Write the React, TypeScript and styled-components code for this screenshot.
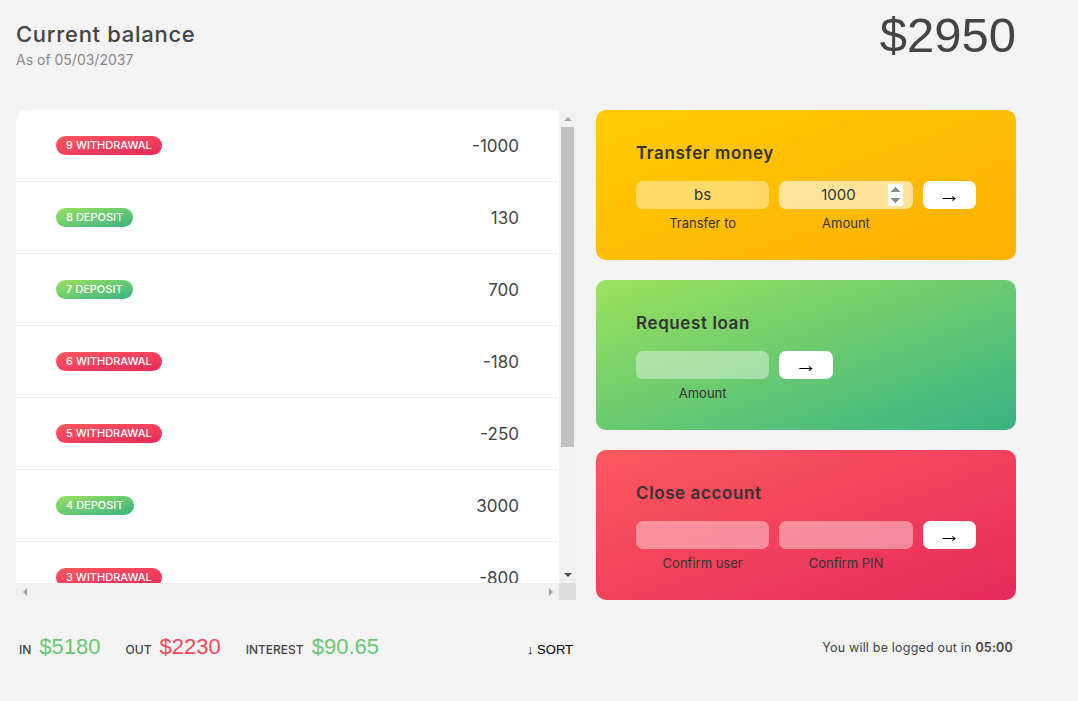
import React from 'react';
import styled, { createGlobalStyle, css } from 'styled-components';

const GlobalStyle = createGlobalStyle`
  * { margin: 0; padding: 0; box-sizing: border-box; }
  html, body { background: #f3f3f3; }
  body {
    font-family: Inter, "Open Sans", sans-serif;
    color: #444;
    line-height: 1.5;
  }
`;

const gradients = {
  withdrawal: 'linear-gradient(to top left, #e52a5a, #ff585f)',
  deposit: 'linear-gradient(to top left, #39b385, #9be15d)',
  transfer: 'linear-gradient(to top left, #ffb003, #ffcb03)',
  loan: 'linear-gradient(to top left, #39b385, #9be15d)',
  close: 'linear-gradient(to top left, #e52a5a, #ff585f)',
};

const AppGrid = styled.main`
  width: 1000px;
  margin: 0 0 0 16px;
  display: grid;
  grid-template-columns: 4fr 3fr;
  grid-template-rows: auto repeat(3, 150px) auto;
  gap: 20px;
`;

const Balance = styled.section`
  grid-column: 1 / span 2;
  display: flex;
  align-items: flex-end;
  justify-content: space-between;
  margin-bottom: 20px;
`;

const BalanceLabel = styled.p`
  font-size: 22px;
  font-weight: 500;
  line-height: 33px;
  letter-spacing: 0.7px;
  margin-bottom: -2px;
`;

const BalanceDate = styled.p`
  font-size: 14px;
  line-height: 21px;
  color: #888;
`;

const BalanceValue = styled.p`
  font-family: "Liberation Sans", Arial, sans-serif;
  font-size: 49px;
  line-height: 70px;
  font-weight: 400;
`;

/* Movements panel with its (drawn) classic scrollbars */
const MovementsPanel = styled.section`
  grid-row: 2 / span 3;
  background-color: #fff;
  border-radius: 10px;
  display: grid;
  grid-template-columns: 1fr 17px;
  grid-template-rows: 1fr 17px;
  min-height: 0;
`;

const MovementsList = styled.div`
  overflow: hidden;
  min-height: 0;
`;

const VScrollbar = styled.div`
  background: #f1f1f1;
  display: flex;
  flex-direction: column;
  min-height: 0;
`;

const HScrollbar = styled.div`
  background: #f1f1f1;
  display: flex;
  justify-content: space-between;
`;

const ScrollCorner = styled.div`
  background: #dcdcdc;
`;

const ScrollButton = styled.div<{ $dir: 'up' | 'down' | 'left' | 'right'; $active?: boolean }>`
  width: 17px;
  height: 17px;
  flex: none;
  display: flex;
  align-items: center;
  justify-content: center;
  &::after {
    content: '';
    width: 0;
    height: 0;
    ${(p) => {
      const c = p.$active ? '#505050' : '#a3a3a3';
      return p.$dir === 'up' || p.$dir === 'down'
        ? css`
            border-left: 4px solid transparent;
            border-right: 4px solid transparent;
            ${p.$dir === 'up' ? 'border-bottom' : 'border-top'}: 4px solid ${c};
          `
        : css`
            border-top: 4px solid transparent;
            border-bottom: 4px solid transparent;
            ${p.$dir === 'left' ? 'border-right' : 'border-left'}: 4px solid ${c};
          `;
    }}
  }
`;

const ScrollTrack = styled.div`
  flex: 1;
  display: flex;
  flex-direction: column;
`;

const ScrollThumb = styled.div`
  height: 320px;
  margin: 0 2px;
  background: #c1c1c1;
`;

const MovementRow = styled.div`
  padding: 22.5px 40px;
  display: flex;
  align-items: center;
  border-bottom: 1px solid #eee;
`;

const MovementType = styled.span<{ $kind: 'deposit' | 'withdrawal' }>`
  font-size: 11px;
  line-height: 16.5px;
  text-transform: uppercase;
  font-weight: 500;
  color: #fff;
  padding: 1px 10px;
  border-radius: 100px;
  margin-right: 20px;
  background-image: ${(p) => gradients[p.$kind]};
`;

const MovementValue = styled.span`
  margin-left: auto;
  font-size: 17px;
  line-height: 26px;
`;

const Operation = styled.section<{ $kind: 'transfer' | 'loan' | 'close' }>`
  border-radius: 10px;
  padding: 30px 40px;
  color: #333;
  background-image: ${(p) => gradients[p.$kind]};
`;

const OperationTitle = styled.h2`
  margin-bottom: 15px;
  padding-top: 1px;
  font-size: 17px;
  line-height: 24.5px;
  font-weight: 600;
  letter-spacing: 0.6px;
  color: #333;
`;

const Form = styled.form<{ $loan?: boolean }>`
  display: grid;
  grid-template-columns: ${(p) => (p.$loan ? '2.5fr 1fr 2.5fr' : '2.5fr 2.5fr 1fr')};
  grid-template-rows: auto auto;
  gap: 4px 10px;
`;

const Input = styled.input<{ $focused?: boolean }>`
  width: 100%;
  border: none;
  background-color: ${(p) => (p.$focused ? 'rgba(255, 255, 255, 0.6)' : 'rgba(255, 255, 255, 0.4)')};
  font-family: inherit;
  font-size: 15px;
  line-height: 22.5px;
  text-align: center;
  color: #333;
  padding: 3px 10px;
  border-radius: 7px;
  outline: none;
  &::-webkit-inner-spin-button {
    opacity: ${(p) => (p.$focused ? 1 : 0)};
  }
`;

const FormButton = styled.button`
  border: none;
  border-radius: 7px;
  font-size: 22px;
  line-height: 24px;
  font-family: "Liberation Sans", Arial, sans-serif;
  background-color: #fff;
  color: #000;
  cursor: pointer;
`;

const FormLabel = styled.label<{ $loan?: boolean }>`
  font-size: 13px;
  line-height: 19.5px;
  padding-top: 1px;
  text-align: center;
  ${(p) =>
    p.$loan &&
    css`
      grid-row: 2;
    `}
`;

const Summary = styled.section`
  grid-row: 5 / 6;
  display: flex;
  align-items: baseline;
  padding: 0 3px;
  margin-top: 10px;
`;

const SummaryLabel = styled.p`
  font-size: 12px;
  line-height: 18px;
  font-weight: 500;
  text-transform: uppercase;
  margin-right: 8px;
`;

const SummaryValue = styled.p<{ $tone: 'in' | 'out' }>`
  font-family: "Liberation Sans", Arial, sans-serif;
  font-size: 22px;
  line-height: 33px;
  margin-right: 25px;
  color: ${(p) => (p.$tone === 'in' ? '#66c873' : '#f5465d')};
`;

const SortButton = styled.button`
  margin-left: auto;
  border: none;
  background: none;
  font-family: "Liberation Sans", Arial, sans-serif;
  font-size: 13px;
  line-height: 19.5px;
  font-weight: 500;
  color: #000;
  padding: 0;
  cursor: pointer;
`;

const LogoutTimer = styled.p`
  grid-column: 2;
  grid-row: 5;
  padding: 0 3px;
  margin-top: 19px;
  text-align: right;
  font-size: 12.5px;
  line-height: 18.75px;
  letter-spacing: 0.2px;
`;

const Timer = styled.span`
  font-weight: 600;
`;

const movements: number[] = [350, 1000, -800, 3000, -250, -180, 700, 130, -1000];

export default function App() {
  const rows = movements.map((mov, i) => ({ mov, n: i + 1 })).reverse();
  return (
    <>
      <GlobalStyle />
      <AppGrid>
        <Balance>
          <div>
            <BalanceLabel>Current balance</BalanceLabel>
            <BalanceDate>As of 05/03/2037</BalanceDate>
          </div>
          <BalanceValue>$2950</BalanceValue>
        </Balance>

        <MovementsPanel>
          <MovementsList>
            {rows.map(({ mov, n }) => {
              const kind = mov > 0 ? 'deposit' : 'withdrawal';
              return (
                <MovementRow key={n}>
                  <MovementType $kind={kind}>
                    {n} {kind}
                  </MovementType>
                  <MovementValue>{mov}</MovementValue>
                </MovementRow>
              );
            })}
          </MovementsList>
          <VScrollbar>
            <ScrollButton $dir="up" />
            <ScrollTrack>
              <ScrollThumb />
            </ScrollTrack>
            <ScrollButton $dir="down" $active />
          </VScrollbar>
          <HScrollbar>
            <ScrollButton $dir="left" />
            <ScrollButton $dir="right" />
          </HScrollbar>
          <ScrollCorner />
        </MovementsPanel>

        <Operation $kind="transfer">
          <OperationTitle>Transfer money</OperationTitle>
          <Form onSubmit={(e) => e.preventDefault()}>
            <Input type="text" defaultValue="bs" />
            <Input type="number" defaultValue={1000} $focused />
            <FormButton>&rarr;</FormButton>
            <FormLabel>Transfer to</FormLabel>
            <FormLabel>Amount</FormLabel>
          </Form>
        </Operation>

        <Operation $kind="loan">
          <OperationTitle>Request loan</OperationTitle>
          <Form $loan onSubmit={(e) => e.preventDefault()}>
            <Input type="number" />
            <FormButton>&rarr;</FormButton>
            <FormLabel $loan>Amount</FormLabel>
          </Form>
        </Operation>

        <Operation $kind="close">
          <OperationTitle>Close account</OperationTitle>
          <Form onSubmit={(e) => e.preventDefault()}>
            <Input type="text" />
            <Input type="password" maxLength={6} />
            <FormButton>&rarr;</FormButton>
            <FormLabel>Confirm user</FormLabel>
            <FormLabel>Confirm PIN</FormLabel>
          </Form>
        </Operation>

        <Summary>
          <SummaryLabel>In</SummaryLabel>
          <SummaryValue $tone="in">$5180</SummaryValue>
          <SummaryLabel>Out</SummaryLabel>
          <SummaryValue $tone="out">$2230</SummaryValue>
          <SummaryLabel>Interest</SummaryLabel>
          <SummaryValue $tone="in">$90.65</SummaryValue>
          <SortButton>&darr; SORT</SortButton>
        </Summary>

        <LogoutTimer>
          You will be logged out in <Timer>05:00</Timer>
        </LogoutTimer>
      </AppGrid>
    </>
  );
}
